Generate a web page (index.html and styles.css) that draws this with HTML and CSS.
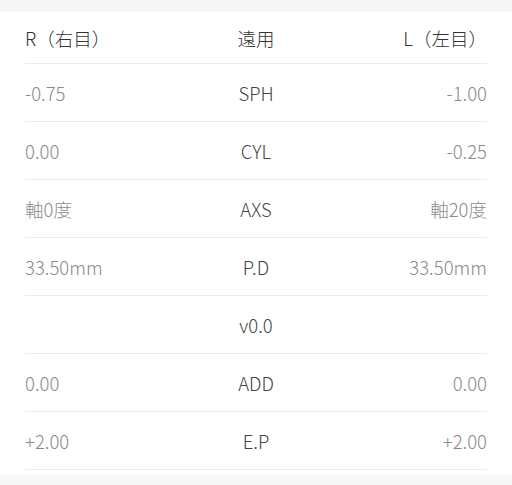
FILE: index.html
```html
<!DOCTYPE html>
<html lang="ja">
<head>
  <meta charset="UTF-8">
  <meta name="viewport" content="width=device-width, initial-scale=1.0">
  <title>処方データ</title>
  <link rel="stylesheet" href="styles.css">
</head>
<body>

  <div class="panel">
    <div class="row head">
      <span class="side">R（右目）</span>
      <span class="label">遠用</span>
      <span class="side right">L（左目）</span>
    </div>
    <div class="row">
      <span class="side">-0.75</span>
      <span class="label">SPH</span>
      <span class="side right">-1.00</span>
    </div>
    <div class="row">
      <span class="side">0.00</span>
      <span class="label">CYL</span>
      <span class="side right">-0.25</span>
    </div>
    <div class="row">
      <span class="side">軸0度</span>
      <span class="label">AXS</span>
      <span class="side right">軸20度</span>
    </div>
    <div class="row">
      <span class="side">33.50mm</span>
      <span class="label">P.D</span>
      <span class="side right">33.50mm</span>
    </div>
    <div class="row">
      <span class="side"></span>
      <span class="label">v0.0</span>
      <span class="side right"></span>
    </div>
    <div class="row">
      <span class="side">0.00</span>
      <span class="label">ADD</span>
      <span class="side right">0.00</span>
    </div>
    <div class="row">
      <span class="side">+2.00</span>
      <span class="label">E.P</span>
      <span class="side right">+2.00</span>
    </div>
  </div>

</body>
</html>
```

FILE: styles.css
```css
body {
  font-family: "Noto Sans CJK JP", "Noto Sans", sans-serif;
  font-weight: 300;
  margin: 0;
  padding: 0;
  background-color: #f7f7f7;
  overflow: hidden;
}
.panel {
  background-color: white;
  margin-top: 12px;
  padding: 0 25px 5px;
}
.row {
  display: grid;
  grid-template-columns: 1fr auto 1fr;
  align-items: center;
  height: 57px;
  border-bottom: 1px solid #ececec;
  font-size: 18.5px;
}
.row.head {
  height: 51px;
}
.side {
  color: #8a8a8a;
}
.side.right {
  text-align: right;
}
.label {
  color: #444;
  text-align: center;
}
.head .side,
.head .label {
  color: #333;
}
```
